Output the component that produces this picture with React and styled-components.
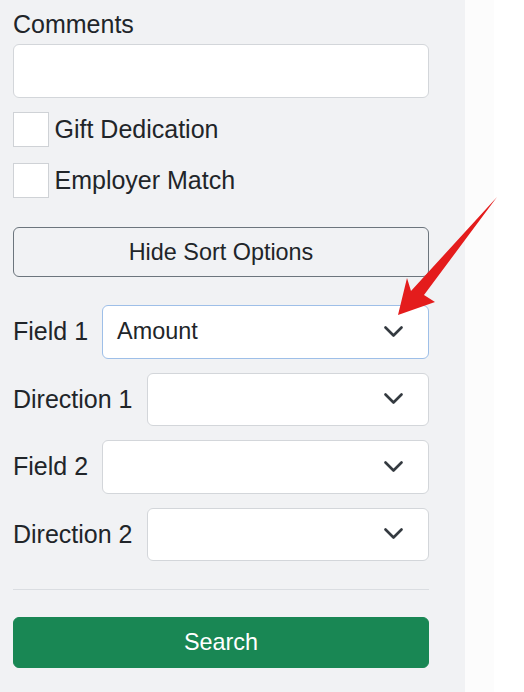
import React from "react";
import styled, { createGlobalStyle } from "styled-components";

const Global = createGlobalStyle`
  html, body { margin: 0; padding: 0; background: #ffffff; }
  body { font-family: "Liberation Sans", Arial, sans-serif; color: #212529; }
  * { box-sizing: border-box; }
`;

const Page = styled.div`
  position: relative;
  display: flex;
  width: 524px;
  height: 692px;
  overflow: hidden;
  background: #ffffff;
`;

const Panel = styled.div`
  width: 465px;
  height: 100%;
  background: #f1f2f4;
  padding: 5.6px 36px 0 13px;
  display: flex;
  flex-direction: column;
`;

const Strip = styled.div`
  width: 29px;
  height: 100%;
  background: #fcfcfc;
`;

const Label = styled.label`
  display: block;
  font-size: 25px;
  line-height: 37.5px;
  margin-bottom: 1px;
`;

const TextInput = styled.input`
  display: block;
  width: 100%;
  height: 53.5px;
  border: 1px solid #d3d6da;
  border-radius: 6px;
  background: #fff;
  font: inherit;
  font-size: 23.4px;
  padding: 0 14px;
  margin-bottom: 14.5px;
  outline: none;
`;

const CheckRow = styled.div`
  display: flex;
  align-items: center;
  gap: 6px;
  height: 35px;
  margin-bottom: ${(p) => p.$mb}px;
`;

const Box = styled.input.attrs({ type: "checkbox" })`
  appearance: none;
  margin: 0;
  width: 35.5px;
  height: 35.5px;
  background: #fff;
  border: 1px solid #cfd2d6;
  border-radius: 0;
  flex: none;
`;

const CheckText = styled.span`
  font-size: 25px;
  line-height: 35px;
`;

const Button = styled.button`
  display: block;
  width: 100%;
  height: ${(p) => p.$h}px;
  border-radius: 6px;
  font-family: inherit;
  font-size: 23.4px;
  cursor: pointer;
  border: 1px solid ${(p) => (p.$primary ? "#198754" : "#6c757d")};
  background: ${(p) => (p.$primary ? "#198754" : "transparent")};
  color: ${(p) => (p.$primary ? "#ffffff" : "#212529")};
  padding: 0;
`;

const SortList = styled.div`
  display: flex;
  flex-direction: column;
  gap: 14px;
  margin-top: 28px;
`;

const SortRow = styled.div`
  display: flex;
  align-items: center;
  gap: 14px;
`;

const RowLabel = styled.span`
  font-size: 25px;
  line-height: 37.5px;
  white-space: nowrap;
`;

const SelectWrap = styled.div`
  position: relative;
  flex: 1;
  height: 53.5px;
  background: #fff;
  border: 1px solid ${(p) => (p.$focus ? "#9ebfe8" : "#d3d6da")};
  border-radius: 6px;
  display: flex;
  align-items: center;
  padding: 0 14px;
  font-size: 23.4px;
`;

const Chevron = styled.svg`
  position: absolute;
  right: 25px;
  top: 50%;
  margin-top: -6px;
  width: 19px;
  height: 12px;
`;

const Divider = styled.hr`
  border: 0;
  border-top: 1px solid #dadde1;
  margin: 27.5px 0 27.5px;
`;

const Arrow = styled.svg`
  position: absolute;
  left: 0;
  top: 0;
  pointer-events: none;
`;

const sorts = [
  { label: "Field 1", value: "Amount", focus: true },
  { label: "Direction 1", value: "" },
  { label: "Field 2", value: "" },
  { label: "Direction 2", value: "" },
];

export default function App() {
  return (
    <Page>
      <Global />
      <Panel>
        <Label>Comments</Label>
        <TextInput />
        <CheckRow $mb={16}>
          <Box />
          <CheckText>Gift Dedication</CheckText>
        </CheckRow>
        <CheckRow $mb={29}>
          <Box />
          <CheckText>Employer Match</CheckText>
        </CheckRow>
        <Button $h={50}>Hide Sort Options</Button>
        <SortList>
          {sorts.map((s) => (
            <SortRow key={s.label}>
              <RowLabel>{s.label}</RowLabel>
              <SelectWrap $focus={s.focus}>
                {s.value}
                <Chevron viewBox="0 0 19 12">
                  <path
                    d="M1.5 1.5 L9.5 9.5 L17.5 1.5"
                    fill="none"
                    stroke="#343a40"
                    strokeWidth="2.6"
                    strokeLinecap="round"
                    strokeLinejoin="round"
                  />
                </Chevron>
              </SelectWrap>
            </SortRow>
          ))}
        </SortList>
        <Divider />
        <Button $primary $h={51}>Search</Button>
      </Panel>
      <Strip />
      <Arrow width="524" height="692" viewBox="0 0 524 692">
        <polygon
          points="497,197 424,295 435,302 398,315 407,278 411,291"
          fill="#e41c1c"
        />
      </Arrow>
    </Page>
  );
}
